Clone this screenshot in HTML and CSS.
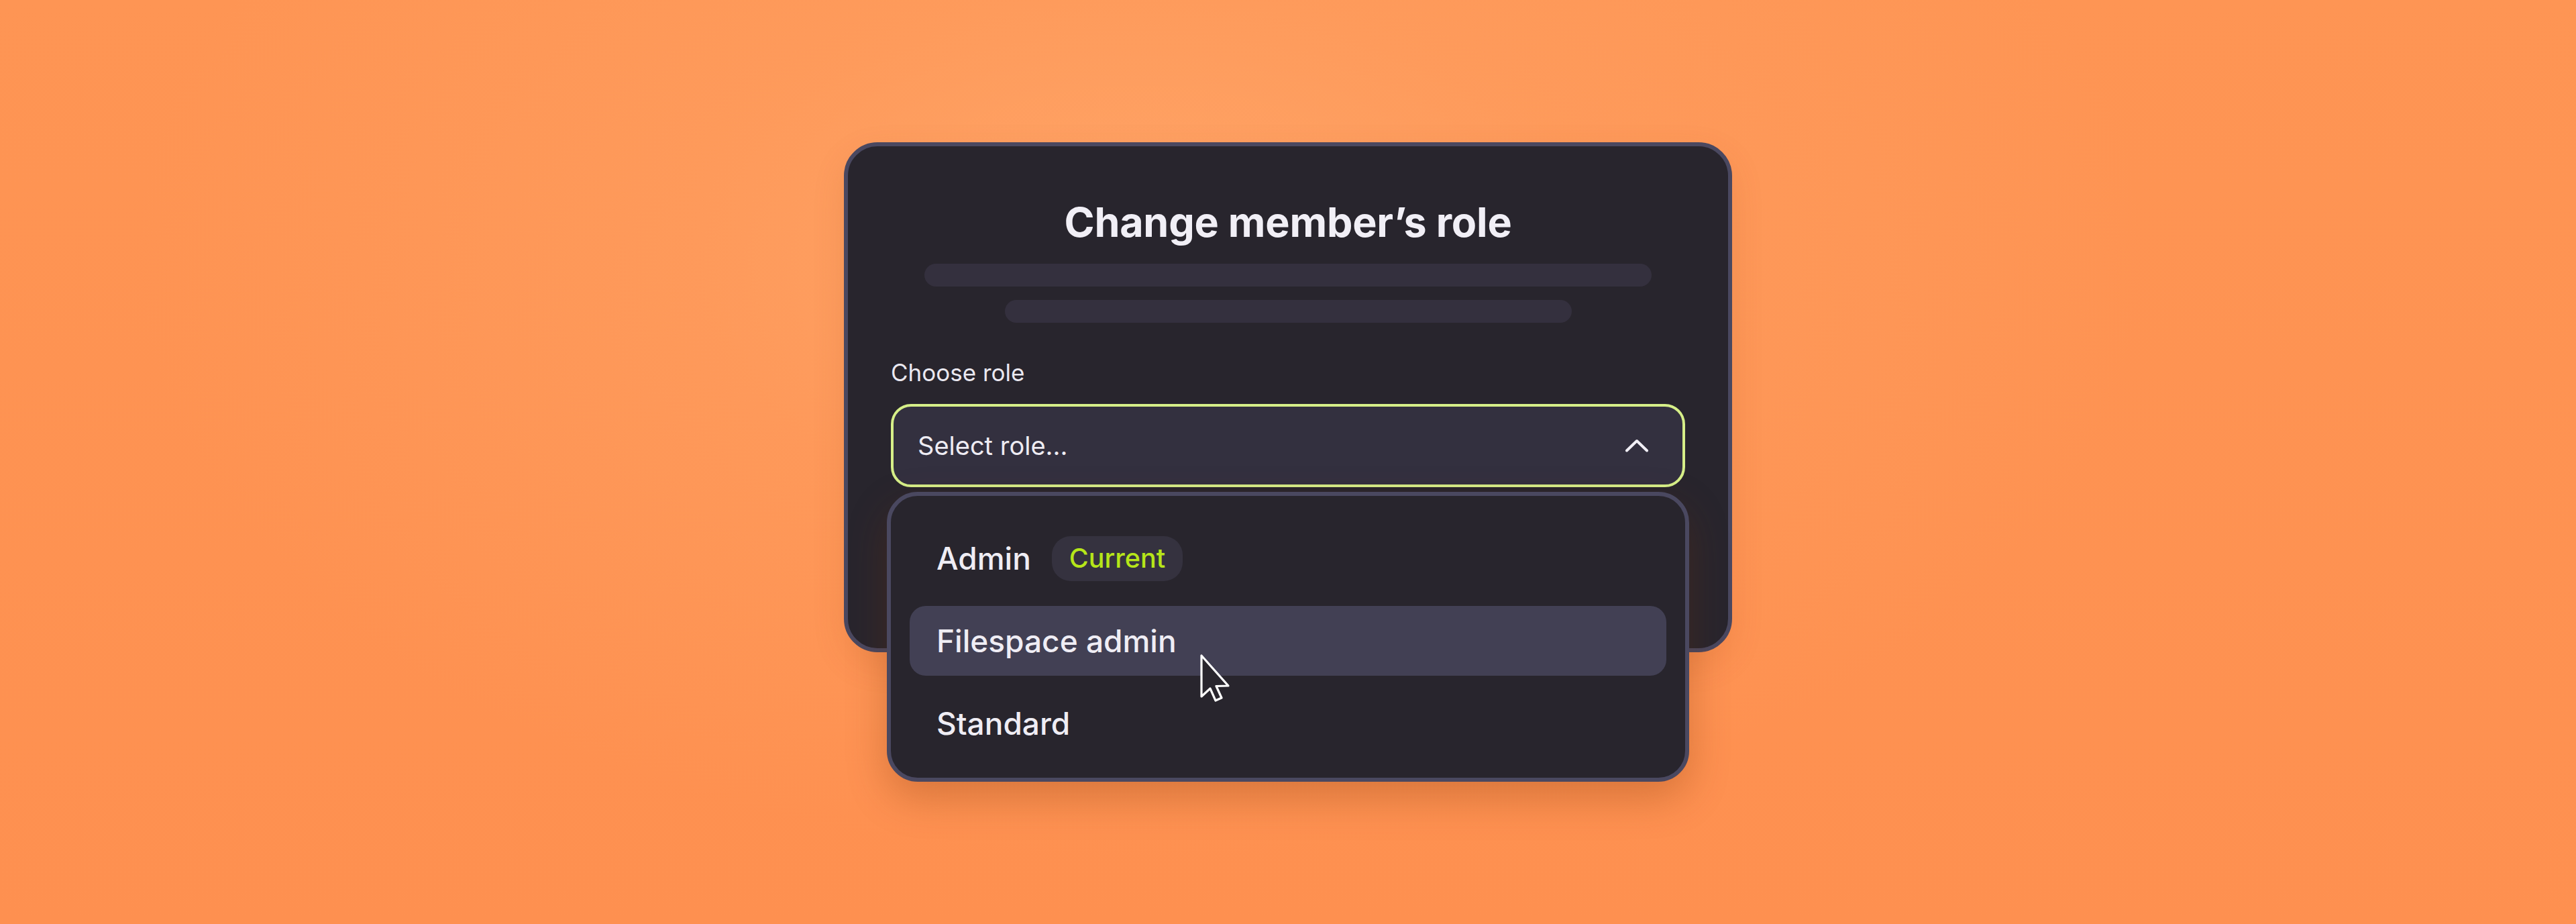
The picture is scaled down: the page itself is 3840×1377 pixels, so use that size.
FILE: index.html
```html
<!DOCTYPE html>
<html lang="en">
<head>
<meta charset="utf-8">
<title>Change member's role</title>
<link rel="stylesheet" href="styles.css">
</head>
<body>
<main class="stage">
  <section class="card">
    <h1 class="title">Change member’s role</h1>
    <div class="skeleton skeleton-long"></div>
    <div class="skeleton skeleton-short"></div>
    <label class="field-label">Choose role</label>
    <div class="select-wrap">
      <div class="select">
        <span class="select-text">Select role...</span>
        <svg class="chevron" width="36" height="20" viewBox="0 0 36 20" aria-hidden="true">
          <path d="M3 17.5 L18 3 L33 17.5" fill="none" stroke="#f1eff6" stroke-width="4" stroke-linecap="round" stroke-linejoin="round"/>
        </svg>
      </div>
      <div class="menu">
        <div class="menu-item">
          <span>Admin</span>
          <span class="badge">Current</span>
        </div>
        <div class="menu-item is-hover">
          <span>Filespace admin</span>
        </div>
        <div class="menu-item">
          <span>Standard</span>
        </div>
        <svg class="cursor" width="46" height="74" viewBox="-3 -3 46 74" aria-hidden="true">
          <path d="M0 0 L0 61 L13 49 L21 67 L30 63 L22 45.5 L40 45 Z" fill="#29262e" stroke="#ffffff" stroke-width="3.2" stroke-linejoin="round"/>
        </svg>
      </div>
    </div>
  </section>
</main>
</body>
</html>
```

FILE: styles.css
```css
* {
  box-sizing: border-box;
}

html, body {
  margin: 0;
  padding: 0;
}

body {
  width: 3840px;
  height: 1377px;
  overflow: hidden;
  font-family: "Inter", "Noto Sans", "Liberation Sans", sans-serif;
  background:
    radial-gradient(ellipse 1500px 900px at 1700px 380px, rgba(255, 170, 110, 0.75) 0%, rgba(255, 165, 105, 0.35) 45%, rgba(255, 160, 100, 0) 100%),
    linear-gradient(180deg, #fe9554 0%, #fe9050 100%);
}

.stage {
  display: flex;
  justify-content: center;
  padding-top: 212px;
}

.card {
  position: relative;
  width: 1324px;
  height: 760px;
  padding: 78px 64px 240px;
  background: #28252d;
  border: 6px solid #4a4860;
  border-radius: 50px;
  display: flex;
  flex-direction: column;
  box-shadow: 0 18px 50px rgba(150, 60, 10, 0.12);
}

.title {
  margin: 0;
  font-size: 61px;
  line-height: 70px;
  font-weight: 700;
  text-align: center;
  color: #f1eff6;
  letter-spacing: -0.2px;
}

.skeleton {
  height: 34px;
  border-radius: 17px;
  background: #34303e;
  align-self: center;
}

.skeleton-long {
  width: 1084px;
  margin-top: 27px;
}

.skeleton-short {
  width: 845px;
  margin-top: 20px;
}

.field-label {
  margin-top: 53px;
  font-size: 35px;
  line-height: 42px;
  font-weight: 400;
  color: #eae8f0;
}

.select-wrap {
  position: relative;
  margin-top: 26px;
}

.select {
  height: 124px;
  border: 4px solid #d6ef88;
  border-radius: 30px;
  background: #33303f;
  display: flex;
  align-items: center;
  justify-content: space-between;
  padding: 0 50px 0 36px;
}

.select-text {
  font-size: 38px;
  font-weight: 400;
  color: #eeecf3;
}

.chevron {
  display: block;
}

.menu {
  position: absolute;
  top: calc(100% + 7px);
  left: -6px;
  width: 1196px;
  padding: 41px 28px 29px;
  background: #28252d;
  border: 6px solid #4a4860;
  border-radius: 46px;
  display: flex;
  flex-direction: column;
  gap: 19px;
  box-shadow: 0 24px 60px rgba(120, 45, 0, 0.28);
  z-index: 2;
}

.menu-item {
  height: 104px;
  padding: 0 40px;
  display: flex;
  align-items: center;
  gap: 31px;
  border-radius: 24px;
  font-size: 46px;
  font-weight: 500;
  color: #efedf4;
}

.menu-item.is-hover {
  background: #424054;
}

.badge {
  height: 67px;
  padding: 0 26px;
  display: flex;
  align-items: center;
  border-radius: 28px;
  background: #35323f;
  color: #b6e619;
  font-size: 39.5px;
  font-weight: 500;
}

.cursor {
  position: absolute;
  left: 460px;
  top: 235px;
}
```
